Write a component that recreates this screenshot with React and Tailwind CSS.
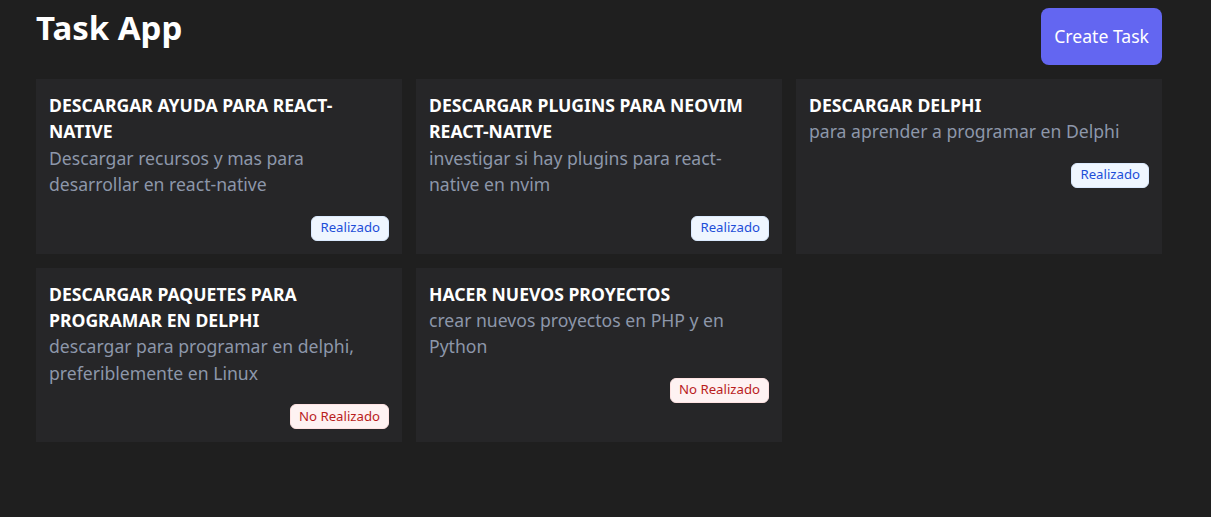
import React from "react";

const tasks = [
  {
    title: "Descargar ayuda para react-native",
    description: "Descargar recursos y mas para desarrollar en react-native",
    done: true,
  },
  {
    title: "Descargar plugins para neovim react-native",
    description: "investigar si hay plugins para react-native en nvim",
    done: true,
  },
  {
    title: "Descargar Delphi",
    description: "para aprender a programar en Delphi",
    done: true,
  },
  {
    title: "Descargar paquetes para programar en Delphi",
    description: "descargar para programar en delphi, preferiblemente en Linux",
    done: false,
  },
  {
    title: "Hacer nuevos proyectos",
    description: "crear nuevos proyectos en PHP y en Python",
    done: false,
  },
];

function TaskCard({ task }) {
  return (
    <div className="bg-[#262628] px-[13px] pt-[13px] pb-[13px]">
      <h2 className="text-[17.6px] leading-[26.4px] font-bold uppercase text-white">{task.title}</h2>
      <p className="text-[17.6px] leading-[26.4px] text-[#8d97aa]">{task.description}</p>
      <div className="flex justify-end mt-[18px]">
        {task.done ? (
          <span className="h-[25px] flex items-center px-[8px] text-[13.2px] rounded-md border border-[#dbeafe] bg-[#eff6ff] text-[#1d4ed8]">
            Realizado
          </span>
        ) : (
          <span className="h-[25px] flex items-center px-[8px] text-[13.2px] rounded-md border border-[#fee2e2] bg-[#fef2f2] text-[#b91c1c]">
            No Realizado
          </span>
        )}
      </div>
    </div>
  );
}

export default function App() {
  return (
    <div className="min-h-screen bg-[#1f1f1f] font-['Noto_Sans',sans-serif] pl-[36px] pt-2">
      <div className="w-[1126px]">
        <div className="flex items-start justify-between">
          <h1 className="text-[33px] leading-[40px] font-bold text-white">Task App</h1>
          <button className="h-[57px] px-[13px] rounded-lg bg-[#6366f1] text-white text-[17.6px]">
            Create Task
          </button>
        </div>
        <div className="mt-[14px] grid grid-cols-3 gap-[14px]">
          {tasks.map((t, i) => (
            <TaskCard key={i} task={t} />
          ))}
        </div>
      </div>
    </div>
  );
}
